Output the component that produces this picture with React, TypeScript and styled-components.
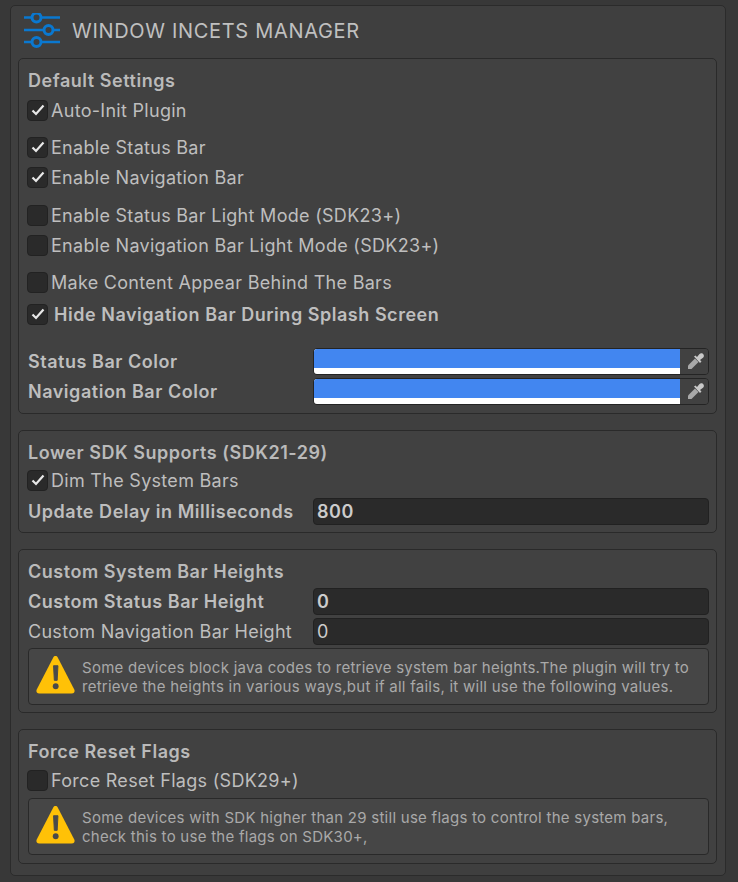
import styled, { createGlobalStyle } from 'styled-components';

const Global = createGlobalStyle`
    html, body {
        margin: 0;
        padding: 0;
        background: #383838;
    }
`;

const Page = styled.div`
    width: 738px;
    height: 882px;
    box-sizing: border-box;
    padding: 5px 12px 6px 10px;
    background: #383838;
    font-family: Inter, 'Liberation Sans', sans-serif;
    overflow: hidden;
`;
const Panel = styled.div`
    height: 100%;
    box-sizing: border-box;
    padding: 0 8px 0 7px;
    background: #3f3f3f;
    border: 1px solid #2b2b2b;
    border-radius: 5px;
`;
const Header = styled.div`
    height: 52px;
    display: flex;
    align-items: center;
    gap: 12px;
    padding: 0 0 2px 6px;
    box-sizing: border-box;
`;
const HeaderTitle = styled.h1`
    margin: 0;
    font-size: 20px;
    font-weight: 400;
    letter-spacing: 0.68px;
    color: #c0c0c0;
`;
const Group = styled.section<{ $height: number }>`
    height: ${p => p.$height}px;
    box-sizing: border-box;
    margin-bottom: 16px;
    padding: 6px 7px 0 9px;
    background: #414141;
    border: 1px solid #2a2a2a;
    border-radius: 5px;
`;
const Row = styled.div<{ $top?: number; $bold?: boolean }>`
    display: flex;
    align-items: center;
    height: 30px;
    margin-top: ${p => p.$top ?? 0}px;
    font-size: 18px;
    font-weight: ${p => (p.$bold ? 600 : 400)};
    letter-spacing: ${p => (p.$bold ? 0.53 : 0.29)}px;
    color: #bebebe;
    white-space: nowrap;
`;
const GroupTitle = styled(Row).attrs({ $bold: true })`
    color: #bababa;
`;
const Box = styled.span`
    flex: none;
    width: 21px;
    height: 21px;
    margin: 0 3px 0 -1px;
    display: flex;
    align-items: center;
    justify-content: center;
    box-sizing: border-box;
    background: #2a2a2a;
    border: 1px solid #222;
    border-radius: 4px;
`;
const BoldLabel = styled.span`
    margin-left: 3px;
`;
const FieldLabel = styled.span`
    flex: none;
    width: 285px;
`;
const ColorField = styled.div`
    flex: 1;
    height: 27px;
    display: flex;
    box-sizing: border-box;
    border: 1px solid #242424;
    border-radius: 4px;
    overflow: hidden;
`;
const Swatch = styled.div`
    flex: 1;
    background: #fff;
`;
const SwatchColor = styled.div`
    height: 19px;
    background: #4286f0;
`;
const Picker = styled.div`
    flex: none;
    width: 28px;
    box-sizing: border-box;
    padding-left: 4px;
    background: #414141;
    display: flex;
    align-items: center;
    justify-content: center;
`;
const NumberField = styled.div<{ $dim?: boolean }>`
    flex: 1;
    height: 27px;
    box-sizing: border-box;
    padding-left: 3px;
    display: flex;
    align-items: center;
    background: #2a2a2a;
    border: 1px solid #212121;
    border-radius: 4px;
    color: #cccccc;
    font-weight: ${p => (p.$dim ? 400 : 600)};
`;
const HelpBox = styled.div<{ $top: number }>`
    height: 57px;
    box-sizing: border-box;
    margin-top: ${p => p.$top}px;
    display: flex;
    align-items: center;
    padding-left: 7px;
    gap: 7px;
    background: #464646;
    border: 1px solid #292929;
    border-radius: 4px;
`;
const WarningSvg = styled.svg`
    flex: none;
    margin-bottom: 4px;
`;
const HelpText = styled.p`
    margin: 0;
    font-size: 15px;
    line-height: 19px;
    letter-spacing: 0.26px;
    color: #a9a9a9;
    white-space: nowrap;
`;

const SlidersIcon = () => (
    <svg width="36" height="36" viewBox="0 0 36 36" fill="none" stroke="#0a78d0">
        <path d="M0 4.500H36M0 17H36M0 29H36" strokeWidth="2.500" />
        <circle cx="12.500" cy="4.500" r="4.500" fill="#3f3f3f" strokeWidth="3" />
        <circle cx="24.500" cy="17" r="4.500" fill="#3f3f3f" strokeWidth="3" />
        <circle cx="12.500" cy="29" r="4.500" fill="#3f3f3f" strokeWidth="3" />
    </svg>
);

const CheckIcon = () => (
    <svg width="14" height="12" viewBox="0 0 14 12" fill="none" stroke="#e8e8e8" strokeWidth="2.200">
        <path d="M1.500 6.500L5 10L12.500 1.500" />
    </svg>
);

const PipetteIcon = () => (
    <svg width="16" height="16" viewBox="0 0 16 16">
        <path d="M0 16V12.500L7 5.500L10.500 9L3.500 16Z" fill="#a8a8a8" />
        <path d="M6 3.500L7.500 2.500L9 4L11.500 1C13 -.3 14.800 .5 15.500 1.500C16.300 3 15.800 4 15 4.800L12 7L13.500 8.500L12 10Z" fill="#c8c8c8" />
    </svg>
);

const WarningIcon = () => (
    <WarningSvg width="39" height="39" viewBox="0 0 40 40">
        <path
            d="M20 1C21 1 21.700 1.500 22.300 2.500L39.500 36C40 38 39 39.500 36.500 39.500H3.500C1 39.500 0 38 .5 36L17.700 2.500C18.300 1.500 19 1 20 1Z"
            fill="#ffc107"
        />
        <path d="M18 11H22.500L21.700 26H18.800Z" fill="#4a4a4a" stroke="#4a4a4a" strokeLinejoin="round" />
        <circle cx="20.200" cy="32" r="3" fill="#4a4a4a" />
    </WarningSvg>
);

const Check = ({ checked, label, bold, top }: { checked?: boolean; label: string; bold?: boolean; top?: number }) => (
    <Row $top={top} $bold={bold}>
        <Box>{checked && <CheckIcon />}</Box>
        {bold ? <BoldLabel>{label}</BoldLabel> : label}
    </Row>
);

const ColorRow = ({ label, top }: { label: string; top?: number }) => (
    <Row $top={top} $bold>
        <FieldLabel>{label}</FieldLabel>
        <ColorField>
            <Swatch>
                <SwatchColor />
            </Swatch>
            <Picker>
                <PipetteIcon />
            </Picker>
        </ColorField>
    </Row>
);

const NumberRow = ({ label, value, bold, top }: { label: string; value: string; bold?: boolean; top?: number }) => (
    <Row $top={top} $bold={bold}>
        <FieldLabel>{label}</FieldLabel>
        <NumberField $dim={!bold}>{value}</NumberField>
    </Row>
);

function App() {
    return (
        <Page>
            <Global />
            <Panel>
                <Header>
                    <SlidersIcon />
                    <HeaderTitle>WINDOW INCETS MANAGER</HeaderTitle>
                </Header>
                <Group $height={356}>
                    <GroupTitle>Default Settings</GroupTitle>
                    <Check checked label="Auto-Init Plugin" />
                    <Check checked label="Enable Status Bar" top={7} />
                    <Check checked label="Enable Navigation Bar" />
                    <Check label="Enable Status Bar Light Mode (SDK23+)" top={8} />
                    <Check label="Enable Navigation Bar Light Mode (SDK23+)" />
                    <Check label="Make Content Appear Behind The Bars" top={7} />
                    <Check checked bold label="Hide Navigation Bar During Splash Screen" top={2} />
                    <ColorRow label="Status Bar Color" top={17} />
                    <ColorRow label="Navigation Bar Color" />
                </Group>
                <Group $height={103}>
                    <GroupTitle>Lower SDK Supports (SDK21-29)</GroupTitle>
                    <Check checked label="Dim The System Bars" top={-2} />
                    <NumberRow bold label="Update Delay in Milliseconds" value="800" top={1} />
                </Group>
                <Group $height={164}>
                    <GroupTitle>Custom System Bar Heights</GroupTitle>
                    <NumberRow bold label="Custom Status Bar Height" value="0" />
                    <NumberRow label="Custom Navigation Bar Height" value="0" />
                    <HelpBox $top={2}>
                        <WarningIcon />
                        <HelpText>
                            Some devices block java codes to retrieve system bar heights.The plugin will try to
                            <br />
                            retrieve the heights in various ways,but if all fails, it will use the following values.
                        </HelpText>
                    </HelpBox>
                </Group>
                <Group $height={135}>
                    <GroupTitle>Force Reset Flags</GroupTitle>
                    <Check label="Force Reset Flags (SDK29+)" top={-1} />
                    <HelpBox $top={3}>
                        <WarningIcon />
                        <HelpText>
                            Some devices with SDK higher than 29 still use flags to control the system bars,
                            <br />
                            check this to use the flags on SDK30+,
                        </HelpText>
                    </HelpBox>
                </Group>
            </Panel>
        </Page>
    );
}

export default App;
